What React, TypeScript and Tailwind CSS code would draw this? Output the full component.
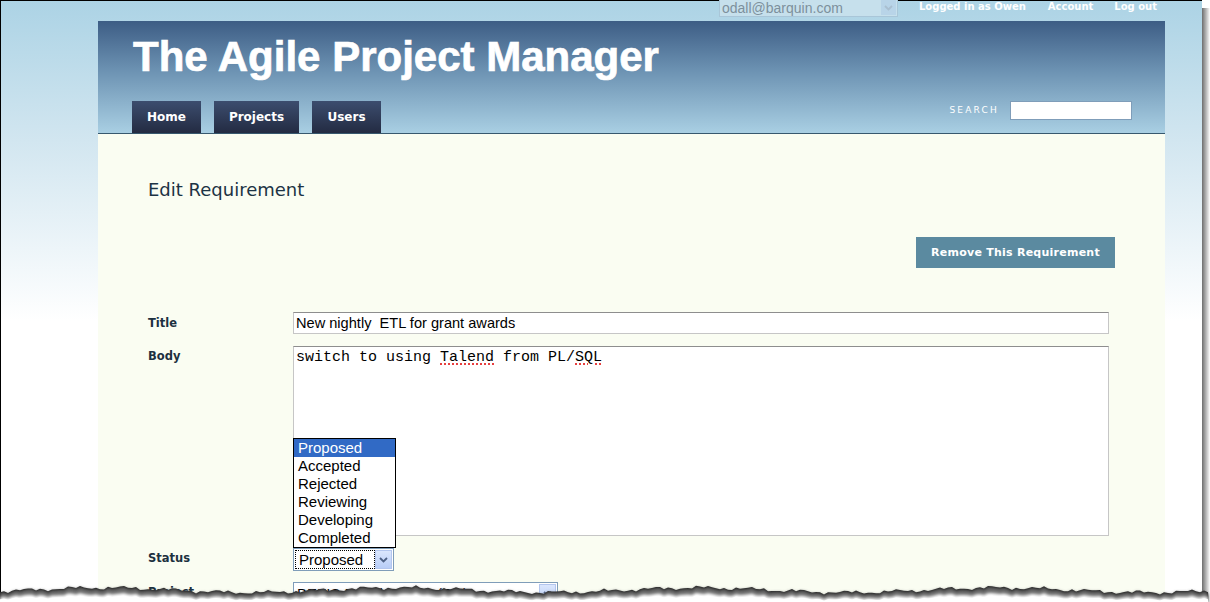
import React from "react";

function tornPoints(base: number, amp: number, seed: number) {
  const pts: string[] = [];
  for (let x = 0; x <= 1210; x += 4) {
    const n =
      Math.sin(x * 0.13 + seed) * 0.45 +
      Math.sin(x * 0.021 + seed * 2) * 0.9 +
      Math.sin(x * 0.47 + seed * 3) * 0.35 +
      Math.sin(x * 0.9 + seed) * 0.2;
    pts.push(`${x},${(base + n * amp).toFixed(1)}`);
  }
  return pts;
}

function TornEdge() {
  const top = tornPoints(18, 2.6, 1.3);
  const edge = `M0,40 L${top.join(" L")} L1210,40 Z`;
  return (
    <svg className="absolute left-0 bottom-0" width="1210" height="30" viewBox="0 0 1210 30">
      <defs>
        <filter id="blur" x="-10%" y="-50%" width="120%" height="200%">
          <feGaussianBlur stdDeviation="1.5" />
        </filter>
      </defs>
      <path d={edge} fill="#1e1e1e" />
      <path d={`M0,40 L${tornPoints(19.2, 2.6, 1.3).join(" L")} L1210,40 Z`} fill="#6a6a6a" filter="url(#blur)" />
      <path d={`M0,40 L${tornPoints(24, 2, 1.3).join(" L")} L1210,40 Z`} fill="#ffffff" filter="url(#blur)" />
      <path d={`M0,40 L${tornPoints(26, 1.5, 1.3).join(" L")} L1210,40 Z`} fill="#ffffff" />
    </svg>
  );
}

function Chevron({ faded = false }: { faded?: boolean }) {
  return (
    <svg width="9" height="6" viewBox="0 0 9 6">
      <path d="M1 1 L4.5 4.5 L8 1" fill="none" stroke={faded ? "#a9bfd0" : "#4d6185"} strokeWidth="1.8" />
    </svg>
  );
}

export default function App() {
  const verd = { fontFamily: '"DejaVu Sans", Verdana, sans-serif' };
  const arial = { fontFamily: '"Liberation Sans", Arial, sans-serif' };
  const mono = { fontFamily: '"Liberation Mono", "Courier New", monospace' };
  return (
    <div className="relative w-[1210px] h-[602px] overflow-hidden bg-white flex">
      <div className="w-[1202px] h-full border-t border-l border-black bg-[linear-gradient(180deg,#acd3e5_0px,#d2e6f0_140px,#ffffff_320px)] flex flex-col">
        {/* top bar */}
        <div className="h-[20px] shrink-0 flex items-start relative">
          <div className="absolute left-[718px] top-[-3px] w-[179px] h-[19px] border border-[#a9c6d8] bg-[#c6e0ec] flex items-center">
            <span className="pl-[2px] text-[14px] leading-none text-[#7d909c]" style={arial}>
              odall@barquin.com
            </span>
            <div className="ml-auto mr-[1px] w-[15px] h-[15px] bg-[#b8d4e8] flex items-center justify-center">
              <Chevron faded />
            </div>
          </div>
          <div className="ml-[918px] flex items-center text-[10px] font-bold text-white leading-[12px]" style={verd}>
            <span>Logged in as Owen</span>
            <span className="ml-[22px]">Account</span>
            <span className="ml-[21px]">Log out</span>
          </div>
        </div>
        {/* main container */}
        <div className="ml-[97px] w-[1067px] flex-1 flex flex-col">
          <div className="h-[113px] shrink-0 border-b border-[#37586e] bg-[linear-gradient(180deg,#3d5d85_0%,#6d93b3_45%,#a9cfe3_100%)] flex flex-col relative">
            <div
              className="ml-[35px] mt-[13px] text-[42px] leading-[46px] font-bold text-white tracking-[0px] [-webkit-text-stroke:0.7px_white]"
              style={arial}
            >
              The Agile Project Manager
            </div>
            <div className="mt-auto ml-[34px] flex gap-[13px]">
              {[
                ["Home", "w-[69px]"],
                ["Projects", "w-[85px]"],
                ["Users", "w-[69px]"],
              ].map(([t, w]) => (
                <div
                  key={t}
                  className={`${w} h-[32px] bg-[linear-gradient(180deg,#3c4d6e,#232b42)] flex items-center justify-center text-white text-[12px] font-bold`}
                  style={verd}
                >
                  {t}
                </div>
              ))}
            </div>
            <div className="absolute right-[33px] top-[80px] flex items-center">
              <span className="text-[9px] tracking-[2.2px] text-white mr-[11px]" style={verd}>
                SEARCH
              </span>
              <div className="w-[122px] h-[19px] bg-white border border-[#7f9db9]" />
            </div>
          </div>
          {/* content */}
          <div className="flex-1 bg-[#fafdf2] relative">
            <div className="ml-[50px] mt-[44px] text-[18px] leading-[24px] text-[#1c3344]" style={verd}>
              Edit Requirement
            </div>
            <div className="flex justify-end mr-[50px] mt-[35px]">
              <div
                className="w-[199px] h-[31px] pt-[2px] bg-[#5b8aa0] text-white text-[11px] font-bold tracking-[0.25px] flex items-center justify-center"
                style={verd}
              >
                Remove This Requirement
              </div>
            </div>
            <div className="mt-[44px] ml-[50px] flex flex-col">
              <div className="flex items-start">
                <div className="w-[145px] pt-[3px] text-[11.5px] font-bold text-[#1c3040]" style={verd}>
                  Title
                </div>
                <div
                  className="w-[816px] h-[22px] bg-white border border-[#c6c6c6] border-t-[#8e8e8e] pl-[2px] text-[14.6px] leading-[20px] text-black whitespace-pre"
                  style={arial}
                >
                  {"New nightly  ETL for grant awards"}
                </div>
              </div>
              <div className="flex items-start mt-[12px]">
                <div className="w-[145px] pt-[2px] text-[11.5px] font-bold text-[#1c3040]" style={verd}>
                  Body
                </div>
                <div
                  className="relative w-[816px] h-[190px] bg-white border border-[#c6c6c6] border-t-[#8e8e8e] pl-[2px] pt-[2px] text-[15px] leading-[18px] text-black"
                  style={mono}
                >
                  switch to using{" "}
                  <span className="underline decoration-dotted decoration-[#e00000] underline-offset-[3px]">Talend</span>{" "}
                  from PL/
                  <span className="underline decoration-dotted decoration-[#e00000] underline-offset-[3px]">SQL</span>
                </div>
              </div>
              <div className="flex items-start mt-[12px]">
                <div className="w-[145px] pt-[2px] text-[11.5px] font-bold text-[#1c3040]" style={verd}>
                  Status
                </div>
                <div className="relative w-[101px] h-[23px] bg-white border border-[#7f9db9] flex items-center">
                  <div className="ml-[1px] h-[19px] w-[80px] border border-dotted border-black flex items-center">
                    <span className="pl-[3px] text-[15px] leading-none text-black" style={arial}>
                      Proposed
                    </span>
                  </div>
                  <div className="ml-auto mr-[1px] w-[17px] h-[19px] bg-[linear-gradient(180deg,#dbe7fd,#b8cdf7)] border border-[#b3c6ee] flex items-center justify-center">
                    <Chevron />
                  </div>
                  <div className="absolute left-[-1px] bottom-[22px] w-[103px] border border-black bg-white flex flex-col" style={arial}>
                    {["Proposed", "Accepted", "Rejected", "Reviewing", "Developing", "Completed"].map((o, i) => (
                      <div
                        key={o}
                        className={`h-[18px] pl-[4px] text-[15px] leading-[18px] ${i === 0 ? "bg-[#316ac5] text-white" : "text-black"}`}
                      >
                        {o}
                      </div>
                    ))}
                  </div>
                </div>
              </div>
              <div className="flex items-start mt-[11px]">
                <div className="w-[145px] pt-[2px] text-[11.5px] font-bold text-[#1c3040]" style={verd}>
                  Project
                </div>
                <div className="w-[265px] h-[23px] bg-white border border-[#7f9db9] flex items-center">
                  <span className="pl-[3px] text-[15px] leading-none text-black" style={arial}>
                    BEFIS Development (CP)
                  </span>
                  <div className="ml-auto mr-[1px] w-[17px] h-[19px] bg-[linear-gradient(180deg,#dbe7fd,#b8cdf7)] border border-[#b3c6ee] flex items-center justify-center">
                    <Chevron />
                  </div>
                </div>
              </div>
            </div>
          </div>
        </div>
      </div>
      <div className="w-[8px] h-full pt-[8px]">
        <div className="w-full h-full bg-[linear-gradient(90deg,#6d6d6d,#b5b5b5_50%,#ffffff)]" />
      </div>
      <TornEdge />
    </div>
  );
}
